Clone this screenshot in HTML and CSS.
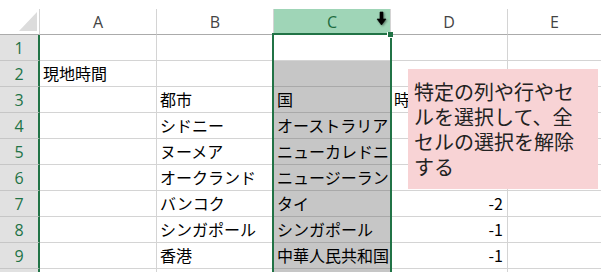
FILE: index.html
```html
<!DOCTYPE html>
<html lang="ja">
<head>
<meta charset="utf-8">
<link rel="stylesheet" href="styles.css">
</head>
<body>
<div class="sheet">
  <div class="corner"><span class="tri"></span></div>
  <div class="colh">A</div>
  <div class="colh">B</div>
  <div class="colh colsel">C
    <svg class="cursor" width="12" height="16" viewBox="0 0 12 16"><path d="M4 1h3v7h3l-4.5 6L1 8h3z" fill="#000" stroke="#000" stroke-width="0.6"/></svg>
  </div>
  <div class="colh">D</div>
  <div class="colh last">E</div>

  <div class="rowh">1</div><div class="cell"></div><div class="cell"></div><div class="cell active"></div><div class="cell"></div><div class="cell last"></div>
  <div class="rowh">2</div><div class="cell">現地時間</div><div class="cell"></div><div class="cell sel"></div><div class="cell"></div><div class="cell last"></div>
  <div class="rowh">3</div><div class="cell"></div><div class="cell">都市</div><div class="cell sel">国</div><div class="cell">時</div><div class="cell last"></div>
  <div class="rowh">4</div><div class="cell"></div><div class="cell">シドニー</div><div class="cell sel">オーストラリア</div><div class="cell"></div><div class="cell last"></div>
  <div class="rowh">5</div><div class="cell"></div><div class="cell">ヌーメア</div><div class="cell sel">ニューカレドニア</div><div class="cell"></div><div class="cell last"></div>
  <div class="rowh">6</div><div class="cell"></div><div class="cell">オークランド</div><div class="cell sel">ニュージーランド</div><div class="cell"></div><div class="cell last"></div>
  <div class="rowh">7</div><div class="cell"></div><div class="cell">バンコク</div><div class="cell sel">タイ</div><div class="cell num">-2</div><div class="cell last"></div>
  <div class="rowh">8</div><div class="cell"></div><div class="cell">シンガポール</div><div class="cell sel">シンガポール</div><div class="cell num">-1</div><div class="cell last"></div>
  <div class="rowh">9</div><div class="cell"></div><div class="cell">香港</div><div class="cell sel">中華人民共和国</div><div class="cell num">-1</div><div class="cell last"></div>
  <div class="rowh"></div><div class="cell"></div><div class="cell"></div><div class="cell sel"></div><div class="cell"></div><div class="cell last"></div>
</div>
<div class="selbox"><span class="handle"></span></div>
<div class="note">特定の列や行やセ<br>ルを選択して、全<br>セルの選択を解除<br>する</div>
</body>
</html>
```

FILE: styles.css
```css
html, body {
  margin: 0;
  padding: 0;
  background: #fff;
  overflow: hidden;
  width: 601px;
  height: 272px;
}
body {
  position: relative;
  font-family: "Noto Sans CJK JP", "Noto Sans", sans-serif;
}
.sheet {
  margin-top: 9px;
  display: grid;
  grid-template-columns: 40px 117px 117px 117px 117px 93px;
  grid-template-rows: 26px repeat(10, 26px);
}
.sheet > div {
  box-sizing: border-box;
}
.corner {
  position: relative;
  border-right: 1px solid #d4d4d4;
  border-bottom: 1px solid #ababab;
}
.tri {
  position: absolute;
  right: 2px;
  bottom: 3px;
  width: 0;
  height: 0;
  border-left: 18px solid transparent;
  border-bottom: 19px solid #dcdcdc;
}
.colh {
  position: relative;
  display: flex;
  align-items: center;
  justify-content: center;
  font-family: "Open Sans", "Noto Sans", sans-serif;
  font-size: 16px;
  color: #444;
  border-right: 1px solid #d4d4d4;
  border-bottom: 1px solid #ababab;
}
.colh.last { border-right: none; }
.colsel {
  background: #9fd5b7;
  color: #1d6b40;
}
.cursor {
  position: absolute;
  left: 102px;
  top: 2px;
  filter: drop-shadow(1px 1px 1px rgba(0,0,0,0.45));
}
.rowh {
  display: flex;
  align-items: center;
  justify-content: center;
  background: #e1e1e1;
  color: #217346;
  font-family: "Open Sans", "Noto Sans", sans-serif;
  font-size: 16px;
  border-right: 2px solid #217346;
  border-bottom: 1px solid #c6c6c6;
}
.cell {
  display: flex;
  align-items: center;
  padding: 0 0 2px 3px;
  font-size: 16px;
  color: #000;
  white-space: nowrap;
  overflow: hidden;
  border-right: 1px solid #d4d4d4;
  border-bottom: 1px solid #d4d4d4;
}
.cell.last { border-right: none; }
.cell.sel {
  background: #c6c6c6;
  border-bottom-color: #a9a9a9;
}
.cell.num {
  justify-content: flex-end;
  padding-right: 4px;
}
.selbox {
  position: absolute;
  left: 272px;
  top: 33px;
  width: 120px;
  height: 260px;
  box-sizing: border-box;
  border: 2px solid #217346;
}
.handle {
  position: absolute;
  left: 113px;
  top: -3px;
  width: 5px;
  height: 5px;
  background: #217346;
  border: 1px solid #fff;
  border-top: none;
  border-right: none;
}
.note {
  position: absolute;
  left: 408px;
  top: 69px;
  width: 190px;
  height: 120px;
  box-sizing: border-box;
  padding: 10px 0 0 6px;
  background: #f8d3d5;
  color: #222;
  font-size: 20px;
  line-height: 25px;
}
```
